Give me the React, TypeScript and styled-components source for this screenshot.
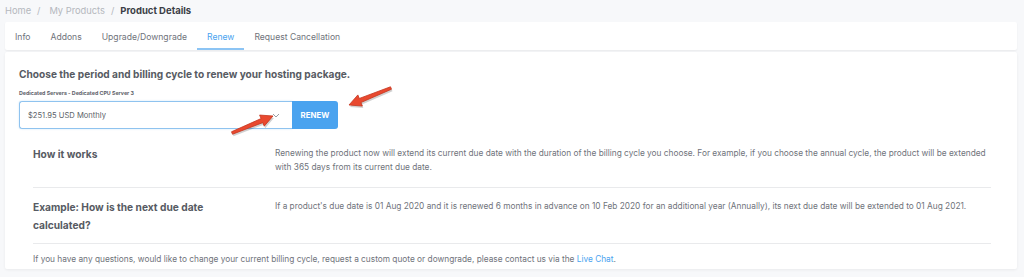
import React from "react";
import styled, { createGlobalStyle } from "styled-components";

const Global = createGlobalStyle`
  html, body { margin: 0; padding: 0; background: #f7f8fa; }
  body { font-family: Inter, "Open Sans", Arial, sans-serif; color: #5b5f67; }
  * { box-sizing: border-box; }
`;

const Page = styled.div`
  position: relative;
  width: 1024px;
  height: 277px;
  overflow: hidden;
  padding: 3px 7px 0 5px;
  display: flex;
  flex-direction: column;
`;

const Crumbs = styled.div`
  display: flex;
  align-items: center;
  gap: 6px;
  height: 15px;
  font-size: 9.3px;
  color: #b4b7bd;
`;

const CrumbItem = styled.span<{ $pad?: boolean }>`
  margin-left: ${(p) => (p.$pad ? 3 : 0)}px;
`;

const CrumbCurrent = styled.span`
  color: #3b3e46;
  font-weight: 700;
  font-size: 9.5px;
`;

const TabsCard = styled.div`
  margin-top: 4px;
  height: 28px;
  background: #fff;
  border-radius: 2px;
  box-shadow: 0 1px 2px rgba(0, 0, 0, 0.06);
  display: flex;
  align-items: stretch;
`;

const Tab = styled.div<{ $active?: boolean }>`
  display: flex;
  align-items: center;
  padding: 3px 10px 0;
  font-size: 8.6px;
  color: ${(p) => (p.$active ? "#4aa3ef" : "#6f737b")};
  border-bottom: 2px solid ${(p) => (p.$active ? "#8cc4f4" : "transparent")};
`;

const BodyCard = styled.div`
  margin-top: 2px;
  height: 217px;
  background: #fff;
  border-radius: 2px;
  box-shadow: 0 1px 3px rgba(0, 0, 0, 0.06);
  padding: 15px 26px 0 14px;
  display: flex;
  flex-direction: column;
`;

const Heading = styled.div`
  font-size: 10.15px;
  font-weight: 700;
  color: #575b63;
  line-height: 14px;
`;

const Label = styled.div`
  margin-top: 8px;
  font-size: 5.3px;
  font-weight: 700;
  color: #5f636b;
  line-height: 8px;
`;

const Controls = styled.div`
  margin-top: 4px;
  display: flex;
  height: 28px;
`;

const Select = styled.div`
  width: 273px;
  border: 1px solid #8fc3ef;
  border-right: none;
  border-radius: 3px 0 0 3px;
  display: flex;
  align-items: center;
  justify-content: space-between;
  padding: 0 12px 0 8px;
  font-size: 7.6px;
  color: #5b5f67;
  box-shadow: 0 0 2px rgba(74, 163, 239, 0.3);
`;

const Button = styled.div`
  width: 46px;
  background: #4aa3ef;
  color: #fff;
  font-weight: 700;
  font-size: 7.8px;
  border-radius: 0 3px 3px 0;
  display: flex;
  align-items: center;
  justify-content: center;
  letter-spacing: 0.1px;
`;

const Rows = styled.div`
  margin-top: 8px;
  padding-left: 14px;
  display: flex;
  flex-direction: column;
`;

const Row = styled.div<{ $h: number; $pt: number }>`
  display: grid;
  grid-template-columns: 242px 1fr;
  height: ${(p) => p.$h}px;
  border-bottom: 1px solid #e9eaec;
  padding-top: ${(p) => p.$pt}px;
`;

const RowTitle = styled.div`
  font-size: 10.2px;
  font-weight: 700;
  color: #575b63;
  line-height: 18px;
`;

const RowText = styled.div`
  font-size: 8.3px;
  color: #6f737b;
  line-height: 14px;
  padding-top: 1px;
`;

const Footer = styled.div`
  font-size: 8.3px;
  color: #6f737b;
  line-height: 12px;
  padding-top: 9px;
`;

const Link = styled.span`
  color: #4aa3ef;
`;

const Overlay = styled.svg`
  position: absolute;
  left: 0;
  top: 0;
  pointer-events: none;
`;

function Arrow({ x1, y1, x2, y2 }: { x1: number; y1: number; x2: number; y2: number }) {
  const dx = x2 - x1;
  const dy = y2 - y1;
  const len = Math.hypot(dx, dy);
  const ux = dx / len;
  const uy = dy / len;
  const nx = -uy;
  const ny = ux;
  const head = 12;
  const hw = 6;
  const sw = 2.2;
  const bx = x2 - ux * head;
  const by = y2 - uy * head;
  const pts = [
    [x1 + nx * sw * 0.6, y1 + ny * sw * 0.6],
    [bx + nx * sw, by + ny * sw],
    [bx + nx * hw, by + ny * hw],
    [x2, y2],
    [bx - nx * hw, by - ny * hw],
    [bx - nx * sw, by - ny * sw],
    [x1 - nx * sw * 0.6, y1 - ny * sw * 0.6],
  ]
    .map((p) => p.join(","))
    .join(" ");
  return (
    <g>
      <polygon points={pts} fill="rgba(0,0,0,0.18)" transform="translate(1,2)" />
      <polygon points={pts} fill="#e9492f" stroke="#c4361f" strokeWidth={0.8} strokeLinejoin="round" />
    </g>
  );
}

export default function App() {
  return (
    <>
      <Global />
      <Page>
        <Crumbs>
          <CrumbItem>Home</CrumbItem>
          <CrumbItem>/</CrumbItem>
          <CrumbItem $pad>My Products</CrumbItem>
          <CrumbItem>/</CrumbItem>
          <CrumbCurrent>Product Details</CrumbCurrent>
        </Crumbs>
        <TabsCard>
          <Tab>Info</Tab>
          <Tab>Addons</Tab>
          <Tab>Upgrade/Downgrade</Tab>
          <Tab $active>Renew</Tab>
          <Tab>Request Cancellation</Tab>
        </TabsCard>
        <BodyCard>
          <Heading>Choose the period and billing cycle to renew your hosting package.</Heading>
          <Label>Dedicated Servers - Dedicated CPU Server 3</Label>
          <Controls>
            <Select>
              <span>$251.95 USD Monthly</span>
              <svg width="8" height="5" viewBox="0 0 8 5">
                <path d="M1 1l3 3 3-3" fill="none" stroke="#9a9ea5" strokeWidth="1" />
              </svg>
            </Select>
            <Button>RENEW</Button>
          </Controls>
          <Rows>
            <Row $h={51} $pt={8}>
              <RowTitle>How it works</RowTitle>
              <RowText>
                Renewing the product now will extend its current due date with the duration of the billing cycle you
                choose. For example, if you choose the annual cycle, the product will be extended with 365 days from its
                current due date.
              </RowText>
            </Row>
            <Row $h={56} $pt={10}>
              <RowTitle>
                Example: How is the next due date
                <br />
                calculated?
              </RowTitle>
              <RowText>
                If a product's due date is 01 Aug 2020 and it is renewed 6 months in advance on 10 Feb 2020 for an
                additional year (Annually), its next due date will be extended to 01 Aug 2021.
              </RowText>
            </Row>
            <Footer>
              If you have any questions, would like to change your current billing cycle, request a custom quote or
              downgrade, please contact us via the <Link>Live Chat</Link>.
            </Footer>
          </Rows>
        </BodyCard>
        <Overlay width="1024" height="277">
          <Arrow x1={232} y1={133} x2={273} y2={116} />
          <Arrow x1={391} y1={88} x2={349} y2={105} />
        </Overlay>
      </Page>
    </>
  );
}
